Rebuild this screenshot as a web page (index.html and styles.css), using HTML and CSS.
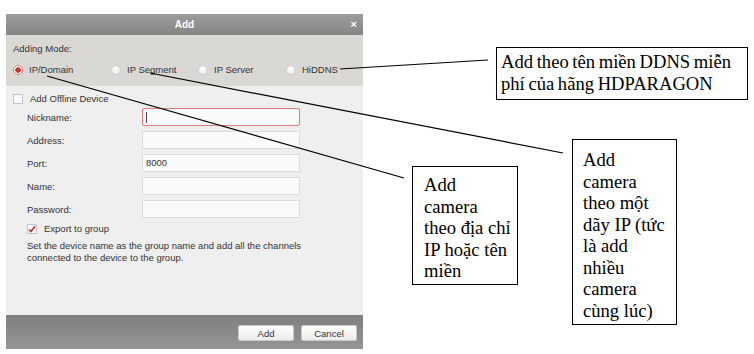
FILE: index.html
```html
<!DOCTYPE html>
<html lang="vi">
  <head>
    <meta charset="UTF-8" />
    <meta name="viewport" content="width=device-width, initial-scale=1.0" />
    <title>Add device</title>
    <link rel="stylesheet" href="styles.css">
  </head>
  <body>
    <div class="stage">
      <div class="dialog">
        <div class="titlebar">
          Add
          <span class="close">&times;</span>
        </div>

        <div class="mode">
          <div class="mode-label">Adding Mode:</div>
          <div class="radios">
            <label class="radio-item"><span class="radio checked"></span>IP/Domain</label>
            <label class="radio-item"><span class="radio"></span>IP Segment</label>
            <label class="radio-item"><span class="radio"></span>IP Server</label>
            <label class="radio-item"><span class="radio"></span>HiDDNS</label>
          </div>
        </div>

        <div class="body">
          <label class="check-row"><span class="check"></span>Add Offline Device</label>

          <div class="form">
            <div class="row"><span class="label">Nickname:</span><div class="field focus"><span class="caret"></span></div></div>
            <div class="row"><span class="label">Address:</span><div class="field"></div></div>
            <div class="row"><span class="label">Port:</span><div class="field">8000</div></div>
            <div class="row"><span class="label">Name:</span><div class="field"></div></div>
            <div class="row row-gap"><span class="label">Password:</span><div class="field"></div></div>
          </div>

          <label class="check-row export">
            <span class="check">
              <svg width="8" height="8" viewBox="0 0 8 8"><path d="M1 4.4 L3 6.5 L7 1.2" fill="none" stroke="#c62828" stroke-width="1.5"/></svg>
            </span>
            Export to group
          </label>
          <p class="hint">Set the device name as the group name and add all the channels<br>connected to the device to the group.</p>
        </div>

        <div class="footer">
          <button class="btn">Add</button>
          <button class="btn">Cancel</button>
        </div>
      </div>

      <!-- callout lines -->
      <svg class="lines" width="754" height="354" viewBox="0 0 754 354">
        <line x1="47" y1="76" x2="404" y2="178" />
        <line x1="150" y1="73" x2="563" y2="153" />
        <line x1="340" y1="69" x2="488" y2="60" />
      </svg>

      <div class="note note-ddns">Add theo tên miền DDNS miễn<br>phí của hãng HDPARAGON</div>
      <div class="note note-ip">Add<br>camera<br>theo địa chỉ<br>IP hoặc tên<br>miền</div>
      <div class="note note-seg">Add<br>camera<br>theo một<br>dãy IP (tức<br>là add<br>nhiều<br>camera<br>cùng lúc)</div>
    </div>
  </body>
</html>
```

FILE: styles.css
```css
/* Page */
body {
  margin: 0;
  background: #fff;
  font-family: "Liberation Sans", Arial, sans-serif;
  font-size: 9.5px;
  color: #333;
}

.stage {
  position: relative;
  width: 754px;
  height: 354px;
  overflow: hidden;
}

/* Dialog */
.dialog {
  margin: 14px 0 0 6px;
  width: 357px;
  height: 335px;
  display: flex;
  flex-direction: column;
}

.titlebar {
  position: relative;
  height: 21px;
  line-height: 21px;
  text-align: center;
  color: #fff;
  font-weight: bold;
  font-size: 10px;
  background: linear-gradient(#9c9c9c, #858585);
}

.titlebar .close {
  position: absolute;
  right: 6px;
  top: 0;
  font-size: 11px;
}

/* Adding mode */
.mode {
  height: 51px;
  box-sizing: border-box;
  padding: 7px 0 0 7px;
  background: #d9d8d5;
}

.mode-label {
  line-height: 14px;
}

.radios {
  display: grid;
  grid-template-columns: 98px 87px 88px auto;
  margin-top: 7px;
  line-height: 14px;
}

.radio-item {
  display: flex;
  align-items: center;
  gap: 6px;
}

.radio {
  width: 8px;
  height: 8px;
  border-radius: 50%;
  border: 1px solid #d0d0d0;
  background: radial-gradient(circle at 40% 35%, #fff, #e4e4e4);
  box-sizing: content-box;
}

.radio.checked {
  border-color: #d77;
  background: radial-gradient(circle, #d32f2f 0 2.5px, #fff 3px);
}

/* Body */
.body {
  flex: 1;
  background: #efefef;
  padding: 7px 0 0 7px;
}

.check-row {
  display: flex;
  align-items: center;
  gap: 7px;
  line-height: 12px;
}

.check {
  width: 8px;
  height: 8px;
  border: 1px solid #c4c4c4;
  background: #fbfbfb;
  display: flex;
  align-items: center;
  justify-content: center;
}

.form {
  margin-top: 3px;
  padding-left: 14px;
}

.row {
  display: flex;
  align-items: center;
  height: 18px;
  margin-bottom: 5px;
}

.row-gap {
  margin-top: 2px;
}

.label {
  width: 115px;
}

.field {
  width: 158px;
  height: 18px;
  box-sizing: border-box;
  border: 1px solid #dcdcdc;
  background: #fafafa;
  padding: 0 3px;
  line-height: 16px;
}

.field.focus {
  border-color: #e07b7b;
  border-radius: 2px;
}

.caret {
  display: inline-block;
  width: 1px;
  height: 11px;
  margin-top: 3px;
  background: #444;
}

.export {
  margin: 0 0 0 14px;
}

.hint {
  margin: 5px 0 0 14px;
  line-height: 12px;
}

/* Footer */
.footer {
  height: 34px;
  box-sizing: border-box;
  background: linear-gradient(#7f7f7f, #959595);
  display: flex;
  justify-content: flex-end;
  align-items: center;
  gap: 7px;
  padding: 2px 6px 0 0;
}

.btn {
  width: 56px;
  height: 16px;
  padding: 0;
  border: 1px solid #c9c9c9;
  border-radius: 2px;
  background: linear-gradient(#fefefe, #ececec);
  font-family: inherit;
  font-size: 9.5px;
  color: #333;
}

/* Callouts */
.lines {
  position: absolute;
  left: 0;
  top: 0;
  pointer-events: none;
}

.lines line {
  stroke: #000;
  stroke-width: 1.2;
}

.note {
  position: absolute;
  box-sizing: border-box;
  border: 1px solid #000;
  background: #fff;
  color: #000;
  font-family: "Liberation Serif", "Times New Roman", serif;
  font-size: 18.6px;
  line-height: 21.5px;
  white-space: nowrap;
}

.note-ddns {
  left: 496px;
  top: 47px;
  width: 252px;
  height: 53px;
  padding: 3px 0 0 4px;
  word-spacing: -1px;
}

.note-ip {
  left: 412px;
  top: 166px;
  width: 106px;
  height: 119px;
  padding: 7px 0 0 11px;
}

.note-seg {
  left: 572px;
  top: 139px;
  width: 105px;
  height: 186px;
  padding: 9px 0 0 10px;
}
```
